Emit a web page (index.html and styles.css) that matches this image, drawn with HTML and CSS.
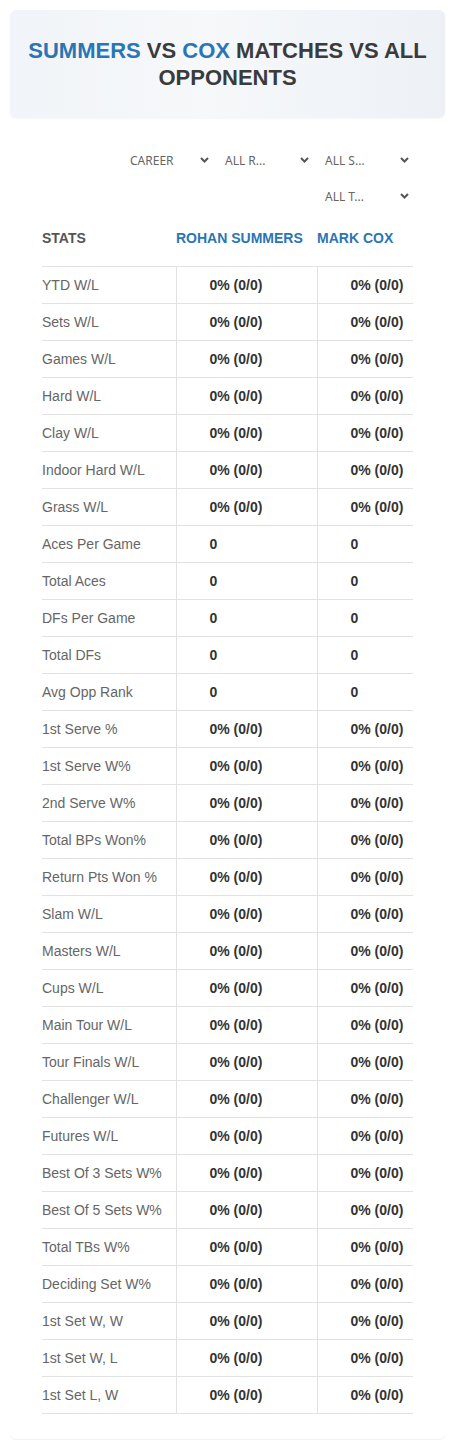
FILE: index.html
```html
<!DOCTYPE html>
<html>
<head>
<meta charset="utf-8">
<link rel="stylesheet" href="styles.css">
</head>
<body>
<div class="hero">
  <h1 class="title"><span class="blue">SUMMERS</span> VS <span class="blue">COX</span> MATCHES VS ALL OPPONENTS</h1>
</div>
<div class="card">
  <div class="filters">
    <div class="select first"><span class="sel-text">CAREER</span><svg class="chev" width="9" height="6" viewBox="0 0 9 6"><polyline points="1,1 4.5,4.5 8,1" fill="none" stroke="#555" stroke-width="2"/></svg></div>
    <div class="select"><span class="sel-text">ALL R...</span><svg class="chev" width="9" height="6" viewBox="0 0 9 6"><polyline points="1,1 4.5,4.5 8,1" fill="none" stroke="#555" stroke-width="2"/></svg></div>
    <div class="select"><span class="sel-text">ALL S...</span><svg class="chev" width="9" height="6" viewBox="0 0 9 6"><polyline points="1,1 4.5,4.5 8,1" fill="none" stroke="#555" stroke-width="2"/></svg></div>
    <div class="select"><span class="sel-text">ALL T...</span><svg class="chev" width="9" height="6" viewBox="0 0 9 6"><polyline points="1,1 4.5,4.5 8,1" fill="none" stroke="#555" stroke-width="2"/></svg></div>
  </div>
  <table class="stats">
    <thead>
      <tr><th class="c1">STATS</th><th class="c2 blue">ROHAN SUMMERS</th><th class="c3 blue">MARK COX</th></tr>
    </thead>
    <tbody>
      <tr><td class="c1">YTD W/L</td><td class="c2">0% (0/0)</td><td class="c3">0% (0/0)</td></tr>
      <tr><td class="c1">Sets W/L</td><td class="c2">0% (0/0)</td><td class="c3">0% (0/0)</td></tr>
      <tr><td class="c1">Games W/L</td><td class="c2">0% (0/0)</td><td class="c3">0% (0/0)</td></tr>
      <tr><td class="c1">Hard W/L</td><td class="c2">0% (0/0)</td><td class="c3">0% (0/0)</td></tr>
      <tr><td class="c1">Clay W/L</td><td class="c2">0% (0/0)</td><td class="c3">0% (0/0)</td></tr>
      <tr><td class="c1">Indoor Hard W/L</td><td class="c2">0% (0/0)</td><td class="c3">0% (0/0)</td></tr>
      <tr><td class="c1">Grass W/L</td><td class="c2">0% (0/0)</td><td class="c3">0% (0/0)</td></tr>
      <tr><td class="c1">Aces Per Game</td><td class="c2">0</td><td class="c3">0</td></tr>
      <tr><td class="c1">Total Aces</td><td class="c2">0</td><td class="c3">0</td></tr>
      <tr><td class="c1">DFs Per Game</td><td class="c2">0</td><td class="c3">0</td></tr>
      <tr><td class="c1">Total DFs</td><td class="c2">0</td><td class="c3">0</td></tr>
      <tr><td class="c1">Avg Opp Rank</td><td class="c2">0</td><td class="c3">0</td></tr>
      <tr><td class="c1">1st Serve %</td><td class="c2">0% (0/0)</td><td class="c3">0% (0/0)</td></tr>
      <tr><td class="c1">1st Serve W%</td><td class="c2">0% (0/0)</td><td class="c3">0% (0/0)</td></tr>
      <tr><td class="c1">2nd Serve W%</td><td class="c2">0% (0/0)</td><td class="c3">0% (0/0)</td></tr>
      <tr><td class="c1">Total BPs Won%</td><td class="c2">0% (0/0)</td><td class="c3">0% (0/0)</td></tr>
      <tr><td class="c1">Return Pts Won %</td><td class="c2">0% (0/0)</td><td class="c3">0% (0/0)</td></tr>
      <tr><td class="c1">Slam W/L</td><td class="c2">0% (0/0)</td><td class="c3">0% (0/0)</td></tr>
      <tr><td class="c1">Masters W/L</td><td class="c2">0% (0/0)</td><td class="c3">0% (0/0)</td></tr>
      <tr><td class="c1">Cups W/L</td><td class="c2">0% (0/0)</td><td class="c3">0% (0/0)</td></tr>
      <tr><td class="c1">Main Tour W/L</td><td class="c2">0% (0/0)</td><td class="c3">0% (0/0)</td></tr>
      <tr><td class="c1">Tour Finals W/L</td><td class="c2">0% (0/0)</td><td class="c3">0% (0/0)</td></tr>
      <tr><td class="c1">Challenger W/L</td><td class="c2">0% (0/0)</td><td class="c3">0% (0/0)</td></tr>
      <tr><td class="c1">Futures W/L</td><td class="c2">0% (0/0)</td><td class="c3">0% (0/0)</td></tr>
      <tr><td class="c1">Best Of 3 Sets W%</td><td class="c2">0% (0/0)</td><td class="c3">0% (0/0)</td></tr>
      <tr><td class="c1">Best Of 5 Sets W%</td><td class="c2">0% (0/0)</td><td class="c3">0% (0/0)</td></tr>
      <tr><td class="c1">Total TBs W%</td><td class="c2">0% (0/0)</td><td class="c3">0% (0/0)</td></tr>
      <tr><td class="c1">Deciding Set W%</td><td class="c2">0% (0/0)</td><td class="c3">0% (0/0)</td></tr>
      <tr><td class="c1">1st Set W, W</td><td class="c2">0% (0/0)</td><td class="c3">0% (0/0)</td></tr>
      <tr><td class="c1">1st Set W, L</td><td class="c2">0% (0/0)</td><td class="c3">0% (0/0)</td></tr>
      <tr><td class="c1">1st Set L, W</td><td class="c2">0% (0/0)</td><td class="c3">0% (0/0)</td></tr>
    </tbody>
  </table>
</div>
</body>
</html>
```

FILE: styles.css
```css
* { box-sizing: border-box; }
html, body { margin: 0; padding: 0; background: #fff; }
body { font-family: "Liberation Sans", Arial, sans-serif; color: #333; }

.hero {
  margin: 10px 10px 0 10px;
  height: 108px;
  border-radius: 6px;
  background: linear-gradient(90deg, #f1f4f8 0%, #f6f8fa 45%, #edf1f6 100%);
  box-shadow: 0 1px 2px rgba(0,0,0,0.04);
  display: flex;
  align-items: center;
  justify-content: center;
  padding: 0 12px;
}
.title {
  margin: 0;
  font-size: 22px;
  line-height: 27px;
  font-weight: bold;
  text-align: center;
  color: #3b3b3b;
}
.blue { color: #2a76b4; }

.card {
  margin: 10px 10px 10px 10px;
  padding: 14px 32px 25px 32px;
  border-radius: 6px;
  background: #fff;
  box-shadow: 0 1px 1px rgba(0,0,0,0.06);
}

.filters {
  display: flex;
  flex-wrap: wrap;
  justify-content: flex-end;
  column-gap: 10px;
}
.select {
  width: 90px;
  height: 36px;
  display: flex;
  align-items: center;
  justify-content: space-between;
  padding: 0 4px 0 2px;
  font-family: "Noto Sans", Roboto, sans-serif;
  font-size: 12px;
  color: #666;
}
.select.first { width: 85px; padding-left: 2px; }
.chev { display: block; }

.stats {
  width: 100%;
  border-collapse: collapse;
  table-layout: fixed;
}
.stats th {
  text-align: left;
  font-size: 14px;
  font-weight: bold;
  height: 52px;
  padding: 0 0 4px 0;
  vertical-align: middle;
  border-bottom: 1px solid #e2e2e2;
}
.stats th.c1 { color: #555; }
.stats .c1 { width: 134px; }
.stats .c2 { width: 141px; }
.stats td {
  height: 37px;
  font-size: 14px;
  border-bottom: 1px solid #e2e2e2;
  padding: 0;
  vertical-align: middle;
}
.stats td.c1 { color: #666; }
.stats td.c2, .stats td.c3 {
  font-weight: bold;
  color: #333;
  padding-left: 33px;
  border-left: 1px solid #e2e2e2;
}
```
